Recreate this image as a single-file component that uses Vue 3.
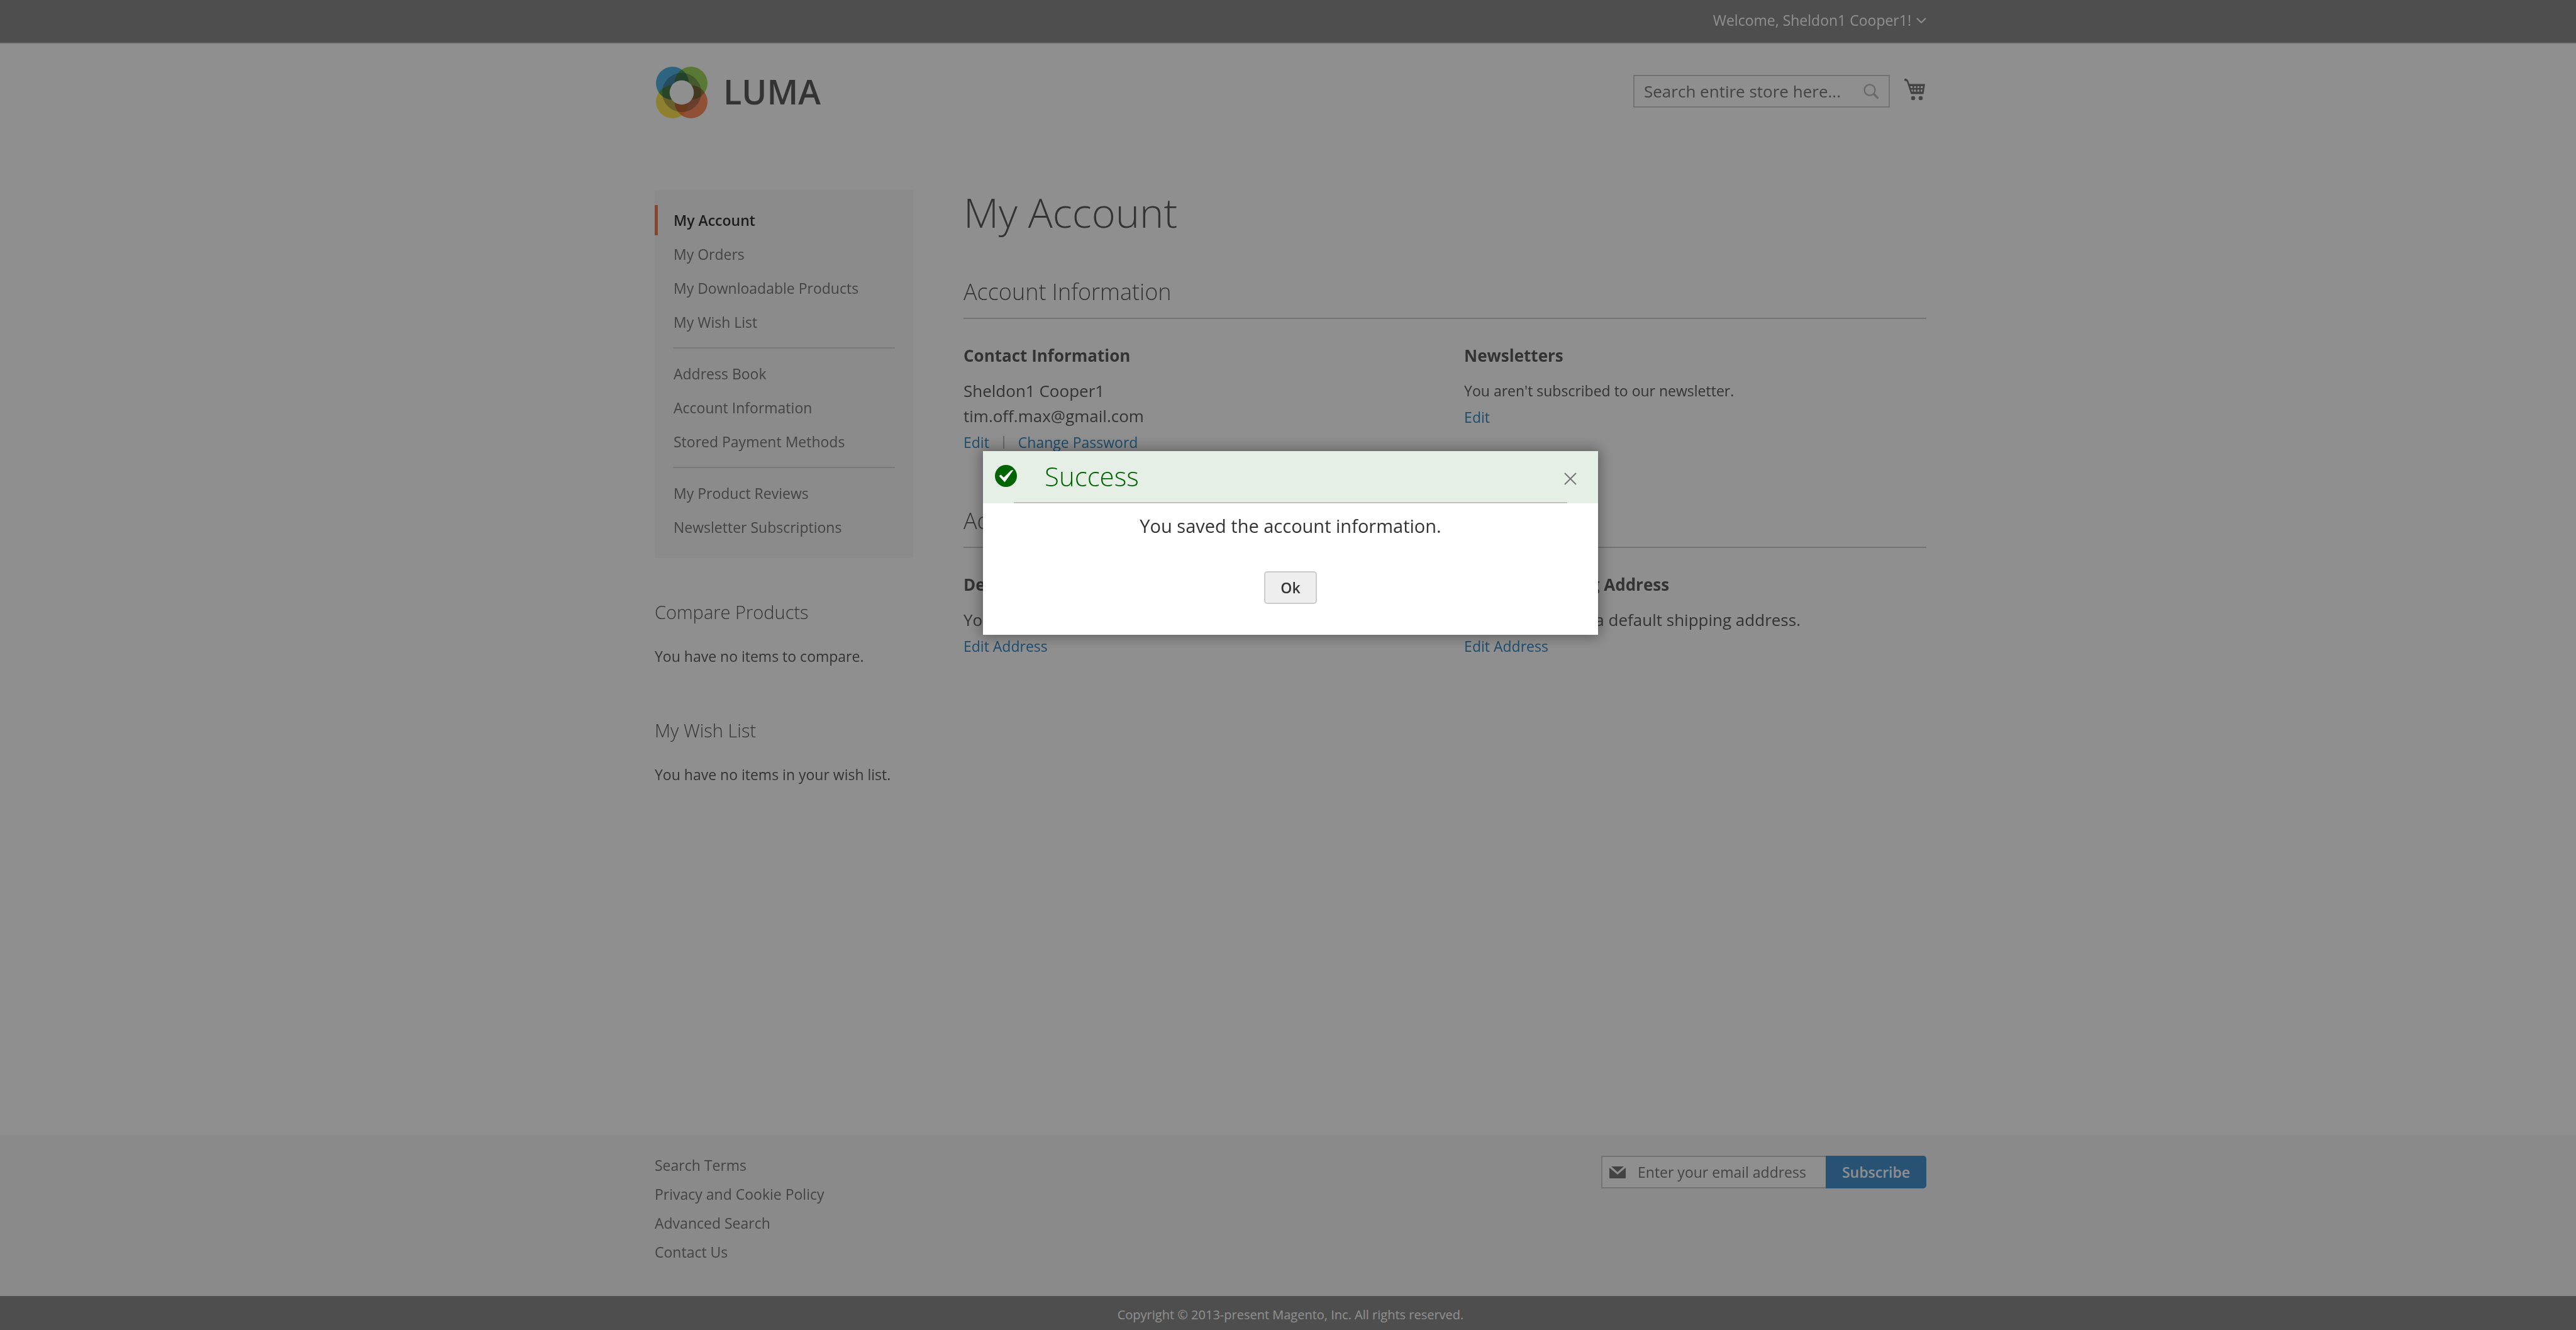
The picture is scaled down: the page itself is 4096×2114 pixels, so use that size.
<script setup>
const navGroups = [
  ['My Account', 'My Orders', 'My Downloadable Products', 'My Wish List'],
  ['Address Book', 'Account Information', 'Stored Payment Methods'],
  ['My Product Reviews', 'Newsletter Subscriptions'],
]
const current = 'My Account'
const footerLinks = ['Search Terms', 'Privacy and Cookie Policy', 'Advanced Search', 'Contact Us']
const sideBlocks = [
  { title: 'Compare Products', text: 'You have no items to compare.' },
  { title: 'My Wish List', text: 'You have no items in your wish list.' },
]
</script>

<template>
  <div class="page">
    <div class="panel">
      <div class="container panel-inner">
        <button class="welcome" type="button">
          Welcome, Sheldon1 Cooper1!
          <svg width="16" height="9" viewBox="0 0 16 9" aria-hidden="true">
            <path d="M1 1l7 7 7-7" fill="none" stroke="currentColor" stroke-width="2" />
          </svg>
        </button>
      </div>
    </div>

    <header class="header">
      <div class="container header-inner">
        <a class="logo" href="#">
          <svg width="82" height="82" viewBox="0 0 100 100" aria-hidden="true">
            <g class="petals">
              <circle cx="32" cy="32" r="32" fill="#28a0de" />
              <circle cx="68" cy="32" r="32" fill="#85cd37" />
              <circle cx="32" cy="68" r="32" fill="#ffde2c" />
              <circle cx="68" cy="68" r="32" fill="#ff733a" />
              <circle cx="50" cy="50" r="38" fill="#aaa" />
            </g>
            <circle cx="50" cy="50" r="23.500" fill="#fff" />
          </svg>
          <span class="wordmark">LUMA</span>
        </a>
        <div class="tools">
          <form class="search" @submit.prevent>
            <input type="search" aria-label="Search" placeholder="Search entire store here..." />
            <button type="submit" aria-label="Search">
              <svg width="25" height="25" viewBox="0 0 25 25" fill="none" stroke="#b0b0b0" aria-hidden="true">
                <circle cx="10" cy="10" r="8.500" stroke-width="2.500" />
                <path d="M16 16l7.500 7.500" stroke-width="3.500" />
              </svg>
            </button>
          </form>
          <a class="cart" href="#" aria-label="My Cart">
            <svg width="33" height="40" viewBox="0 0 33 40" fill="#575757" aria-hidden="true">
              <path d="M1.800 0C3.500 0 5.500 1.500 6.300 3.500L8 8.500H33L30.500 24.500H10.500L4.500 6C4 4.500 3 3.800 1.800 3.800A1.900 1.900 0 0 1 1.800 0Z" />
              <path d="M9.500 12h3.500v3H10.400ZM15.500 12h3v3h-3ZM20.800 12h3v3h-3ZM26 12h3.600l-.4 3H26ZM11 17.500h2.500v3.200H12ZM15.500 17.500h3v3.200h-3ZM20.800 17.500h3v3.200h-3ZM26 17.500h2.800l-.6 3.200H26Z" fill="#fff" />
              <circle cx="14" cy="31" r="3.300" />
              <circle cx="26" cy="31" r="3.300" />
            </svg>
          </a>
        </div>
      </div>
    </header>

    <div class="body">
      <div class="container columns">
        <aside class="sidebar">
          <nav class="account-nav" aria-label="Account">
            <ul v-for="(group, i) in navGroups" :key="i">
              <li v-for="item in group" :key="item">
                <a href="#" :class="{ current: item === current }">{{ item }}</a>
              </li>
            </ul>
          </nav>
          <section v-for="block in sideBlocks" :key="block.title" class="side-block">
            <h2>{{ block.title }}</h2>
            <p>{{ block.text }}</p>
          </section>
        </aside>

        <main class="main">
          <h1>My Account</h1>

          <section class="block">
            <h2>Account Information</h2>
            <div class="boxes">
              <div class="box">
                <h3>Contact Information</h3>
                <p>Sheldon1 Cooper1<br />tim.off.max@gmail.com</p>
                <div class="actions">
                  <a href="#">Edit</a>
                  <span class="divider"></span>
                  <a href="#">Change Password</a>
                </div>
              </div>
              <div class="box">
                <h3>Newsletters</h3>
                <p class="small">You aren't subscribed to our newsletter.</p>
                <div class="actions"><a href="#">Edit</a></div>
              </div>
            </div>
          </section>

          <section class="block">
            <h2>Address Book</h2>
            <div class="boxes">
              <div class="box">
                <h3>Default Billing Address</h3>
                <p>You have not set a default billing address.</p>
                <div class="actions"><a href="#">Edit Address</a></div>
              </div>
              <div class="box">
                <h3>Default Shipping Address</h3>
                <p>You have not set a default shipping address.</p>
                <div class="actions"><a href="#">Edit Address</a></div>
              </div>
            </div>
          </section>
        </main>
      </div>
    </div>

    <footer class="footer">
      <div class="container footer-inner">
        <ul>
          <li v-for="link in footerLinks" :key="link"><a href="#">{{ link }}</a></li>
        </ul>
        <form class="subscribe" @submit.prevent>
          <div class="email">
            <svg width="26" height="19" viewBox="0 0 26 19" aria-hidden="true">
              <path d="M3 0H23L13 9Z" fill="#575757" />
              <path d="M0 2L13 13 26 2V17.500Q26 19 24.500 19H1.500Q0 19 0 17.500Z" fill="#575757" />
            </svg>
            <input type="email" aria-label="Newsletter email" placeholder="Enter your email address" />
          </div>
          <button type="submit">Subscribe</button>
        </form>
      </div>
    </footer>
    <small class="copyright">Copyright © 2013-present Magento, Inc. All rights reserved.</small>

    <div class="overlay">
      <div class="modal" role="dialog" aria-modal="true" aria-labelledby="modal-title">
        <div class="modal-header">
          <div class="modal-bar">
            <svg width="35" height="35" viewBox="0 0 35 35" aria-hidden="true">
              <circle cx="17.500" cy="17.500" r="17.500" fill="#006400" />
              <path d="M6.500 17.500L9.500 15.500 14 20 25.500 8.800 29.500 8 15.500 27.500Z" fill="#fff" />
            </svg>
            <h2 id="modal-title">Success</h2>
            <button class="close" type="button" aria-label="Close">
              <svg width="20" height="20" viewBox="0 0 20 20" aria-hidden="true">
                <path d="M1 1l18 18M19 1L1 19" stroke="#757575" stroke-width="2" />
              </svg>
            </button>
          </div>
          <hr />
        </div>
        <div class="modal-content">
          <p>You saved the account information.</p>
          <button type="button">Ok</button>
        </div>
      </div>
    </div>
  </div>
</template>

<style>
body {
  margin: 0;
}
</style>

<style scoped>
.page {
  position: relative;
  display: flex;
  flex-direction: column;
  min-height: 100vh;
  background: #fff;
  color: #333;
  font: 400 23px/32px "Open Sans", "Noto Sans", sans-serif;
}
.page * {
  box-sizing: border-box;
}
h1, h2, h3, p, ul {
  margin: 0;
  padding: 0;
}
ul {
  list-style: none;
}
a {
  color: #006bb4;
  text-decoration: none;
}
button, input {
  margin: 0;
  padding: 0;
  border: 0;
  background: none;
  color: inherit;
  font: inherit;
}
svg {
  display: block;
  flex: none;
}
input::placeholder {
  color: #575757;
  opacity: 1;
}

.panel, .header, .body, .footer, .copyright, .overlay {
  padding-left: 8px;
}
.container {
  width: 100%;
  max-width: 2022px;
  margin: 0 auto;
}

.panel {
  background: #6f6f6f;
  border-bottom: 2px solid #e0e0e0;
  color: #fff;
}
.panel-inner {
  display: flex;
  justify-content: flex-end;
  padding: 16px 0 20px;
}
.welcome {
  display: flex;
  align-items: center;
  gap: 8px;
}

.header-inner {
  display: flex;
  align-items: center;
  justify-content: space-between;
  padding-top: 36px;
}
.logo {
  display: flex;
  align-items: center;
  gap: 25px;
  padding-left: 2px;
  color: #333;
}
.petals {
  isolation: isolate;
}
.petals circle {
  mix-blend-mode: multiply;
}
.wordmark {
  padding-bottom: 4px;
  font-size: 54px;
  font-weight: 600;
  line-height: 56px;
}
.tools {
  display: flex;
  align-items: center;
  gap: 23px;
  padding: 0 2px 4px 0;
}
.search {
  display: flex;
  align-items: center;
  width: 408px;
  height: 52px;
  padding: 0 15px;
  border: 2px solid #c1c1c1;
}
.search input {
  flex: 1;
  min-width: 0;
  font-size: 26px;
  line-height: 40px;
}

.body {
  flex: 1;
}
.columns {
  display: flex;
  align-items: flex-start;
  gap: 80px;
  padding: 114px 0 80px;
}
.sidebar {
  flex: none;
  width: 411px;
}
.account-nav {
  padding: 24px 0 25px;
  background: #f5f5f5;
}
.account-nav ul {
  display: flex;
  flex-direction: column;
  gap: 6px;
}
.account-nav ul + ul::before {
  content: "";
  height: 2px;
  margin: 16px 29px 10px;
  background: #d1d1d1;
}
.account-nav a {
  display: block;
  padding-left: 25px;
  border-left: 5px solid transparent;
  color: #575757;
  line-height: 48px;
}
.account-nav a.current {
  border-color: #ff5519;
  color: #000;
  font-weight: 600;
}
.side-block {
  margin-top: 66px;
}
.side-block + .side-block {
  margin-top: 82px;
}
.side-block h2 {
  margin-bottom: 34px;
  font-size: 29px;
  font-weight: 300;
  line-height: 40px;
}

.main {
  flex: 1;
  min-width: 0;
}
h1 {
  font-size: 65px;
  font-weight: 300;
  line-height: 70px;
}
.block {
  margin-top: 72px;
}
.block + .block {
  margin-top: 89px;
}
.block > h2 {
  padding-bottom: 21px;
  border-bottom: 2px solid #c1c1c1;
  font-size: 36px;
  font-weight: 300;
  line-height: 40px;
}
.boxes {
  display: grid;
  grid-template-columns: 52fr 48fr;
  margin-top: 40px;
}
.box h3 {
  margin-bottom: 18px;
  font-size: 26px;
  font-weight: 700;
  line-height: 36px;
}
.box p {
  font-size: 26px;
  line-height: 40px;
}
.box p.small {
  font-size: 23px;
}
.actions {
  display: flex;
  align-items: center;
  gap: 22px;
  margin-top: 6px;
}
.divider {
  width: 2px;
  height: 20px;
  background: #a8a8a8;
}

.footer {
  background: #f4f4f4;
}
.footer-inner {
  display: flex;
  align-items: flex-start;
  justify-content: space-between;
  padding: 25px 0 47px;
}
.footer a {
  color: #575757;
  line-height: 46px;
}
.footer li {
  height: 46px;
}
.subscribe {
  display: flex;
  height: 52px;
  margin-top: 8px;
}
.email {
  display: flex;
  align-items: center;
  gap: 19px;
  width: 357px;
  padding-left: 11px;
  border: 2px solid #c1c1c1;
  border-right: 0;
  background: #fff;
}
.email input {
  flex: 1;
  min-width: 0;
}
.subscribe button {
  width: 160px;
  border-radius: 0 5px 5px 0;
  background: #1979c3;
  color: #fff;
  font-weight: 600;
}
.copyright {
  padding-top: 15px;
  padding-bottom: 9px;
  background: #6f6f6f;
  color: #fff;
  font-size: 20px;
  line-height: 30px;
  text-align: center;
}

.overlay {
  position: absolute;
  inset: 0;
  display: flex;
  align-items: flex-start;
  justify-content: center;
  padding-top: 717px;
  background: rgba(51, 51, 51, 0.55);
}
.modal {
  width: 978px;
  background: #fff;
  box-shadow: 0 0 20px 3px rgba(0, 0, 0, 0.35);
}
.modal-header {
  background: #e5efe5;
}
.modal-bar {
  display: flex;
  align-items: center;
  height: 81px;
  padding: 0 34px 2px 19px;
}
.modal-bar h2 {
  flex: 1;
  margin-left: 44px;
  color: #006400;
  font-size: 42px;
  font-weight: 300;
  line-height: 56px;
}
.close {
  padding-top: 8px;
}
hr {
  height: 2px;
  margin: 0 49px;
  border: 0;
  background: #c1c1c1;
}
.modal-content {
  display: flex;
  flex-direction: column;
  align-items: center;
  gap: 52px;
  padding: 16px 0 49px;
}
.modal-content p {
  font-size: 29px;
  line-height: 40px;
}
.modal-content button {
  width: 84px;
  height: 52px;
  border: 2px solid #ccc;
  border-radius: 5px;
  background: #eee;
  font-weight: 600;
}
</style>
